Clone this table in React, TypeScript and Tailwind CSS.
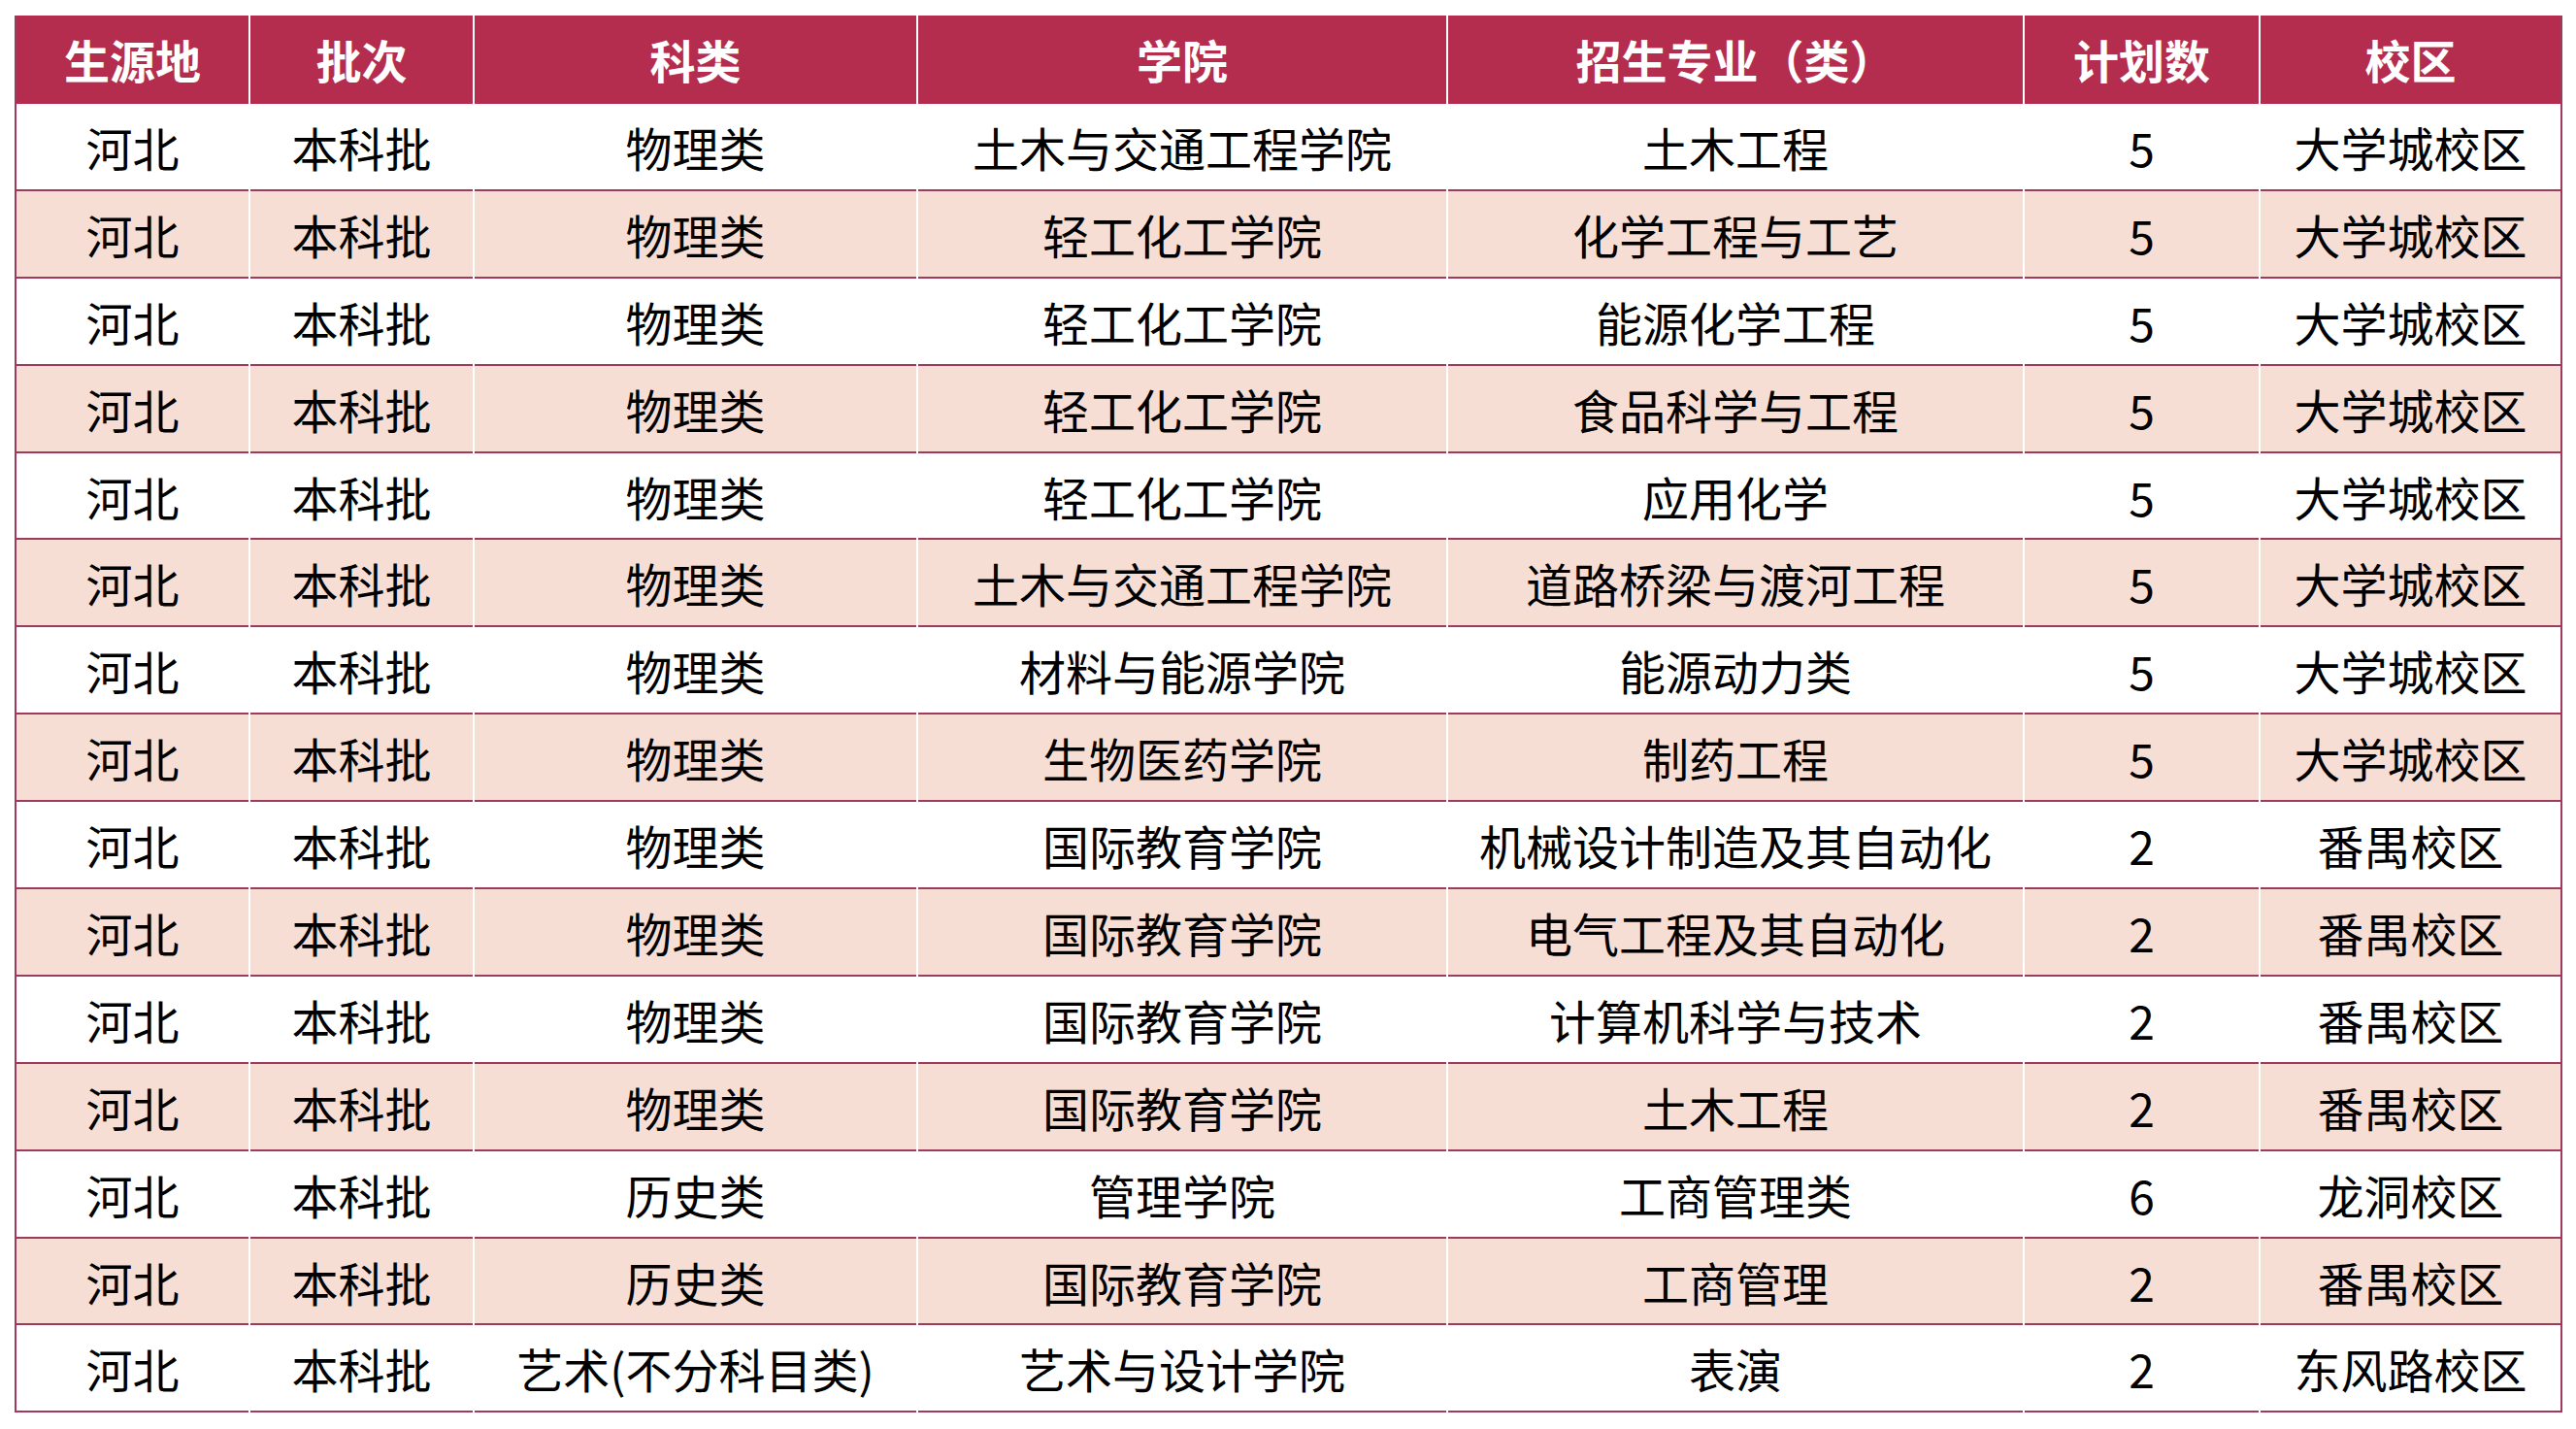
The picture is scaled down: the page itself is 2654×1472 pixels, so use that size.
const headers = ['生源地', '批次', '科类', '学院', '招生专业（类）', '计划数', '校区'];

const rows: string[][] = [
  ['河北', '本科批', '物理类', '土木与交通工程学院', '土木工程', '5', '大学城校区'],
  ['河北', '本科批', '物理类', '轻工化工学院', '化学工程与工艺', '5', '大学城校区'],
  ['河北', '本科批', '物理类', '轻工化工学院', '能源化学工程', '5', '大学城校区'],
  ['河北', '本科批', '物理类', '轻工化工学院', '食品科学与工程', '5', '大学城校区'],
  ['河北', '本科批', '物理类', '轻工化工学院', '应用化学', '5', '大学城校区'],
  ['河北', '本科批', '物理类', '土木与交通工程学院', '道路桥梁与渡河工程', '5', '大学城校区'],
  ['河北', '本科批', '物理类', '材料与能源学院', '能源动力类', '5', '大学城校区'],
  ['河北', '本科批', '物理类', '生物医药学院', '制药工程', '5', '大学城校区'],
  ['河北', '本科批', '物理类', '国际教育学院', '机械设计制造及其自动化', '2', '番禺校区'],
  ['河北', '本科批', '物理类', '国际教育学院', '电气工程及其自动化', '2', '番禺校区'],
  ['河北', '本科批', '物理类', '国际教育学院', '计算机科学与技术', '2', '番禺校区'],
  ['河北', '本科批', '物理类', '国际教育学院', '土木工程', '2', '番禺校区'],
  ['河北', '本科批', '历史类', '管理学院', '工商管理类', '6', '龙洞校区'],
  ['河北', '本科批', '历史类', '国际教育学院', '工商管理', '2', '番禺校区'],
  ['河北', '本科批', '艺术(不分科目类)', '艺术与设计学院', '表演', '2', '东风路校区'],
];

export default function App() {
  return (
    <div className="w-[2654px] h-[1472px] bg-white pt-[16px] pl-[15px] font-['Noto_Sans_CJK_SC',sans-serif]">
      <div className="w-[2625px] border-x-2 border-[#9e3a5c]">
        <div className="grid grid-cols-[239px_229px_455px_544px_592px_241px_309px] gap-x-[2px] bg-white">
          {headers.map((h) => (
            <div
              key={h}
              className="h-[91px] bg-[#b52d4e] flex items-center justify-center text-white text-[47px] font-bold"
            >
              {h}
            </div>
          ))}
          {rows.map((row, i) =>
            row.map((cell, j) => (
              <div
                key={i + '-' + j}
                className={
                  'h-[89.9px] border-b-2 border-[#9e3a5c] flex items-center justify-center text-black text-[48px] leading-none ' +
                  (i % 2 === 1 ? 'bg-[#f6ded5]' : 'bg-white')
                }
              >
                {cell}
              </div>
            ))
          )}
        </div>
      </div>
    </div>
  );
}
